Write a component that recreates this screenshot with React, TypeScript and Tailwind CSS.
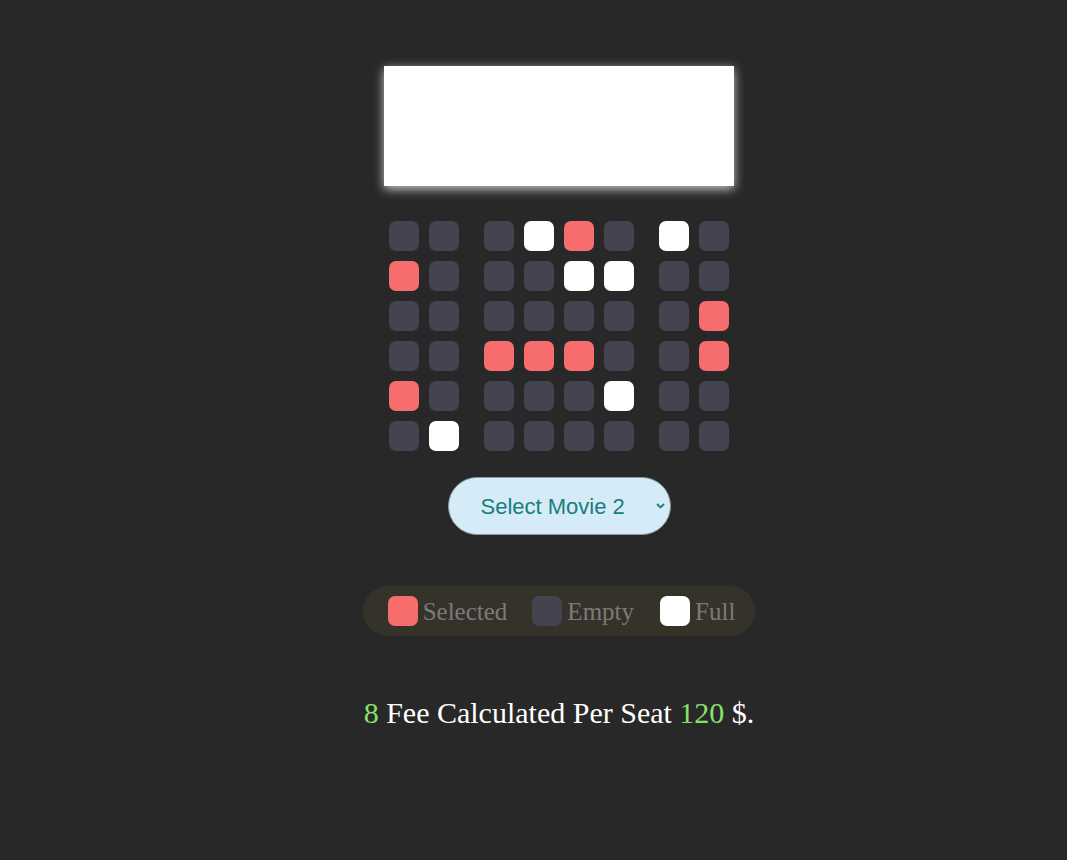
import React from "react";

type S = "E" | "S" | "F";

const rows: S[][] = [
  ["E", "E", "E", "F", "S", "E", "F", "E"],
  ["S", "E", "E", "E", "F", "F", "E", "E"],
  ["E", "E", "E", "E", "E", "E", "E", "S"],
  ["E", "E", "S", "S", "S", "E", "E", "S"],
  ["S", "E", "E", "E", "E", "F", "E", "E"],
  ["E", "F", "E", "E", "E", "E", "E", "E"],
];

function Seat({ s, extra = "" }: { s: S; extra?: string }) {
  const color =
    s === "S" ? "bg-[#f76d6d]" : s === "F" ? "bg-white" : "bg-[#444451]";
  return <div className={`w-[30px] h-[30px] rounded-[7px] ${color} ${extra}`} />;
}

export default function App() {
  return (
    <div className="min-h-[860px] w-full bg-[#282828] flex flex-col items-center pl-[51px]">
      <div className="mt-[66px] w-[350px] h-[120px] bg-white shadow-[0_3px_10px_rgba(255,255,255,0.75)]" />
      <div className="mt-[30px] flex flex-col">
        {rows.map((r, i) => (
          <div key={i} className="flex">
            {r.map((s, j) => (
              <Seat
                key={j}
                s={s}
                extra={`m-[5px] ${j === 2 || j === 6 ? "ml-[20px]" : ""}`}
              />
            ))}
          </div>
        ))}
      </div>
      <div className="relative mt-[21px] w-[223px] h-[58px] rounded-full bg-[#d5ebf7] border border-[#8a9aa3] flex items-center">
        <span className="pl-[32px] text-[22px] text-[#187e80] font-['Liberation_Sans',Arial,sans-serif]">
          Select Movie 2
        </span>
        <svg
          className="absolute right-[5px] top-[25px]"
          width="9"
          height="6"
          viewBox="0 0 9 6"
        >
          <path d="M1 1 L4.5 4.5 L8 1" stroke="#187e80" strokeWidth="1.8" fill="none" />
        </svg>
      </div>
      <div className="mt-[51px] h-[50px] rounded-full bg-[#35322a] flex items-center pl-[25px] pr-[20px] font-['Liberation_Serif','Times_New_Roman',serif] text-[25px] text-[#7a7a7a]">
        <Seat s="S" />
        <span className="ml-[5px] leading-none">Selected</span>
        <Seat s="E" extra="ml-[25px]" />
        <span className="ml-[5px] leading-none">Empty</span>
        <Seat s="F" extra="ml-[26px]" />
        <span className="ml-[5px] leading-none">Full</span>
      </div>
      <p className="mt-[60px] font-['Liberation_Serif','Times_New_Roman',serif] text-[30px] leading-[34px] text-white">
        <span className="text-[#86e36a]">8</span> Fee Calculated Per Seat{" "}
        <span className="text-[#86e36a]">120</span> $.
      </p>
    </div>
  );
}
